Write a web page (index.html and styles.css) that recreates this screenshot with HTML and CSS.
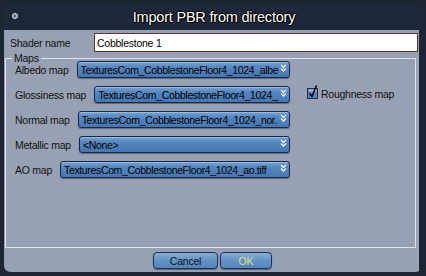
FILE: index.html
```html
<!DOCTYPE html>
<html>
<head>
<meta charset="utf-8">
<link rel="stylesheet" href="styles.css">
</head>
<body>
<div class="dialog">
  <div class="titlebar">
    <span class="dot"></span>
    <span class="title">Import PBR from directory</span>
  </div>
  <div class="panel">
    <div class="name-row">
      <span class="name-label">Shader name</span>
      <div class="input">Cobblestone 1</div>
    </div>
    <div class="group">
      <span class="group-title">Maps</span>
      <div class="row">
        <div class="field"><span class="label">Albedo map</span><div class="combo"><span class="ctext">TexturesCom_CobblestoneFloor4_1024_albe</span><svg class="chev" width="7" height="8" viewBox="0 0 7 8"><path d="M1 1 L3.5 3.5 L6 1 M1 4.5 L3.5 7 L6 4.5" fill="none" stroke="#f4f6fa" stroke-width="1.3"/></svg></div></div>
      </div>
      <div class="row">
        <div class="field"><span class="label">Glossiness map</span><div class="combo"><span class="ctext">TexturesCom_CobblestoneFloor4_1024_</span><svg class="chev" width="7" height="8" viewBox="0 0 7 8"><path d="M1 1 L3.5 3.5 L6 1 M1 4.5 L3.5 7 L6 4.5" fill="none" stroke="#f4f6fa" stroke-width="1.3"/></svg></div></div>
        <div class="check">
          <svg width="12" height="14" viewBox="0 0 12 14"><rect x="0.5" y="3.5" width="10" height="10" fill="#5d84b6" stroke="#1a2c48"/><rect x="1.5" y="4.5" width="8" height="2" fill="#9fbde0"/><path d="M2.5 8.5 L5 11.5 L9.5 0.5" fill="none" stroke="#05070c" stroke-width="1.6"/></svg>
          <span class="label">Roughness map</span>
        </div>
      </div>
      <div class="row">
        <div class="field"><span class="label">Normal map</span><div class="combo"><span class="ctext">TexturesCom_CobblestoneFloor4_1024_nor.</span><svg class="chev" width="7" height="8" viewBox="0 0 7 8"><path d="M1 1 L3.5 3.5 L6 1 M1 4.5 L3.5 7 L6 4.5" fill="none" stroke="#f4f6fa" stroke-width="1.3"/></svg></div></div>
      </div>
      <div class="row">
        <div class="field"><span class="label">Metallic map</span><div class="combo"><span class="ctext">&lt;None&gt;</span><svg class="chev" width="7" height="8" viewBox="0 0 7 8"><path d="M1 1 L3.5 3.5 L6 1 M1 4.5 L3.5 7 L6 4.5" fill="none" stroke="#f4f6fa" stroke-width="1.3"/></svg></div></div>
      </div>
      <div class="row">
        <div class="field"><span class="label">AO map</span><div class="combo"><span class="ctext">TexturesCom_CobblestoneFloor4_1024_ao.tiff</span><svg class="chev" width="7" height="8" viewBox="0 0 7 8"><path d="M1 1 L3.5 3.5 L6 1 M1 4.5 L3.5 7 L6 4.5" fill="none" stroke="#f4f6fa" stroke-width="1.3"/></svg></div></div>
      </div>
    </div>
    <div class="buttons">
      <div class="btn btn-cancel">Cancel</div>
      <div class="btn btn-ok">OK</div>
    </div>
  </div>
</div>
</body>
</html>
```

FILE: styles.css
```css
html, body {
  margin: 0;
  padding: 0;
}
body {
  width: 426px;
  height: 276px;
  background: #1d2533;
  font-family: "Liberation Sans", Arial, sans-serif;
  overflow: hidden;
}
.dialog {
  margin: 4px 0 0 3px;
  width: 420px;
  height: 268px;
  background: #1b2535;
  border-radius: 8px;
  display: flex;
  flex-direction: column;
  overflow: hidden;
}
.titlebar {
  height: 26px;
  flex: none;
  background: #1d293b;
  display: flex;
  align-items: center;
  justify-content: center;
  position: relative;
}
.dot {
  position: absolute;
  left: 9px;
  top: 9px;
  width: 4px;
  height: 4px;
  border-radius: 50%;
  background: #6e7580;
  border: 1px solid #e6e8ec;
}
.title {
  color: #ffffff;
  font-size: 14.5px;
  letter-spacing: -0.2px;
  margin-left: 2px;
  text-shadow: 1px 0 0 #000, -1px 0 0 #000, 0 1px 0 #000, 0 -1px 0 #000, 1px 1px 1px #000;
}
.panel {
  flex: 1;
  margin: 0 4px 1px 1px;
  background: #98a1b3;
  border-radius: 0 0 0 7px;
  display: flex;
  flex-direction: column;
  padding: 3px 0 4px 0;
  box-sizing: border-box;
}
.name-row {
  display: flex;
  align-items: center;
  padding-left: 6px;
  margin-right: 1px;
  height: 19px;
}
.name-label {
  width: 84px;
  font-size: 10.5px;
  letter-spacing: -0.25px;
  color: #111;
}
.input {
  flex: 1;
  height: 19px;
  box-sizing: border-box;
  background: #fff;
  border: 1px solid #5a3a22;
  font-size: 10.5px;
  letter-spacing: -0.25px;
  color: #000;
  padding: 3px 0 0 2px;
}
.group {
  position: relative;
  margin: 6px 3px 0 1px;
  height: 190px;
  box-sizing: border-box;
  border: 1px solid #dfe3ea;
  padding: 2px 0 0 9px;
  display: flex;
  flex-direction: column;
  gap: 8px;
}
.group-title {
  position: absolute;
  top: -7px;
  left: 6px;
  padding: 0 2px;
  background: #98a1b3;
  font-size: 10.5px;
  letter-spacing: -0.25px;
  line-height: 12px;
  color: #111;
}
.row {
  display: flex;
  align-items: center;
  height: 17px;
}
.field {
  width: 275px;
  display: flex;
  align-items: center;
  gap: 8px;
  flex: none;
}
.label {
  font-size: 10.5px;
  letter-spacing: -0.25px;
  color: #111;
  white-space: nowrap;
}
.combo {
  flex: 1;
  min-width: 0;
  height: 17px;
  box-sizing: border-box;
  border: 1px solid #14294a;
  border-radius: 3px;
  background: linear-gradient(#78a3d3 0%, #5486bf 35%, #4677b1 100%);
  box-shadow: 0 1px 1px rgba(20, 30, 50, 0.45), inset 0 1px 0 rgba(190, 215, 240, 0.5);
  display: flex;
  align-items: center;
  padding: 0 2px 0 3px;
  overflow: hidden;
}
.ctext {
  flex: 1;
  min-width: 0;
  overflow: hidden;
  white-space: nowrap;
  font-size: 10.5px;
  letter-spacing: -0.35px;
  color: #000;
}
.chev {
  flex: none;
  margin-left: 0;
  margin-top: -4px;
}
.check {
  display: flex;
  align-items: center;
  gap: 2px;
  margin-left: 17px;
  margin-top: -2px;
}
.check svg {
  margin-top: -3px;
}
.buttons {
  margin-top: 4px;
  display: flex;
  justify-content: center;
  gap: 2px;
  padding-left: 2px;
}
.btn {
  height: 17px;
  box-sizing: border-box;
  border: 1px solid #173257;
  border-radius: 4px;
  background: linear-gradient(#86add6 0%, #6592c4 50%, #5684b8 100%);
  box-shadow: 0 1px 1px rgba(20, 30, 50, 0.5);
  font-size: 10.5px;
  letter-spacing: -0.2px;
  display: flex;
  align-items: center;
  justify-content: center;
}
.btn-cancel {
  width: 65px;
  color: #0d1420;
}
.btn-ok {
  width: 52px;
  color: #d6e489;
}
```
